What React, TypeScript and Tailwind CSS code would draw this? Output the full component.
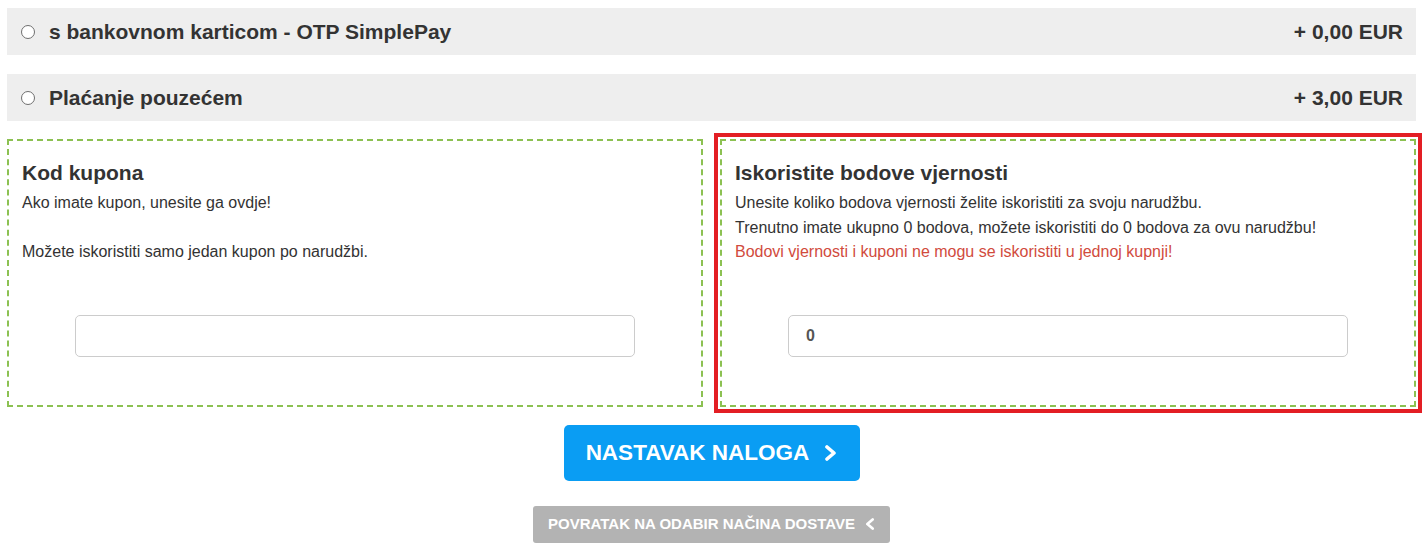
const methods = [
  { name: "s bankovnom karticom - OTP SimplePay", price: "+ 0,00 EUR" },
  { name: "Plaćanje pouzećem", price: "+ 3,00 EUR" },
]

function Chevron({ dir, className }: { dir: "left" | "right"; className?: string }) {
  const points = dir === "right" ? "3,2 10,8 3,14" : "10,2 3,8 10,14"
  return (
    <svg viewBox="0 0 13 16" className={className} fill="none">
      <polyline points={points} stroke="currentColor" strokeWidth="3.6" strokeLinecap="round" strokeLinejoin="round" />
    </svg>
  )
}

function PaymentRow({ name, price }: { name: string; price: string }) {
  return (
    <label className="flex h-[47px] items-center justify-between bg-[#eeeeee] pl-[14px] pr-[13px] text-[21px] font-bold text-[#333333]">
      <span className="flex items-center gap-[14px]">
        <span className="h-[14px] w-[14px] rounded-full border-[1.5px] border-[#6f6f6f] bg-white" />
        {name}
      </span>
      <span>{price}</span>
    </label>
  )
}

export default function App() {
  return (
    <div className="bg-white px-[7px] pt-2 pb-[9px] font-['Liberation_Sans',Arial,sans-serif] text-[#333333]">
      <div className="flex flex-col gap-[19px]">
        {methods.map((m) => (
          <PaymentRow key={m.name} name={m.name} price={m.price} />
        ))}
      </div>

      <div className="mt-[18px] grid grid-cols-2 gap-[17px]">
        <div className="flex flex-col border-2 border-dashed border-[#8cc152] px-[13px] pt-[20px] pb-[48px]">
          <h3 className="text-[21px] font-bold leading-6">Kod kupona</h3>
          <p className="mt-[6px] text-[16px] leading-[24.5px]">
            Ako imate kupon, unesite ga ovdje!
            <br />
            <br />
            Možete iskoristiti samo jedan kupon po narudžbi.
          </p>
          <input
            type="text"
            className="mx-auto mt-[50px] h-[42px] w-[560px] rounded-[5px] border border-[#cccccc] px-[17px] text-[16px] font-bold text-[#555555] outline-none"
          />
        </div>

        <div className="flex flex-col border-2 border-dashed border-[#8cc152] px-[13px] pt-[20px] pb-[48px] outline-4 outline-offset-2 outline-[#e31e24] outline-solid">
          <h3 className="text-[21px] font-bold leading-6">Iskoristite bodove vjernosti</h3>
          <p className="mt-[6px] text-[16px] leading-[24.5px]">
            Unesite koliko bodova vjernosti želite iskoristiti za svoju narudžbu.
            <br />
            Trenutno imate ukupno 0 bodova, možete iskoristiti do 0 bodova za ovu narudžbu!
            <br />
            <span className="text-[#d14b3d]">Bodovi vjernosti i kuponi ne mogu se iskoristiti u jednoj kupnji!</span>
          </p>
          <input
            type="text"
            defaultValue="0"
            className="mx-auto mt-[50px] h-[42px] w-[560px] rounded-[5px] border border-[#cccccc] px-[17px] text-[16px] font-bold text-[#555555] outline-none"
          />
        </div>
      </div>

      <div className="mt-[18px] flex flex-col items-center gap-[25px]">
        <button className="flex h-[56px] w-[296px] items-center justify-center gap-[15px] rounded-[5px] bg-[#0a9df3] text-[22.5px] font-bold text-white">
          NASTAVAK NALOGA
          <Chevron dir="right" className="h-[16px] w-[13px]" />
        </button>
        <button className="flex h-[37px] w-[357px] items-center justify-center gap-[10px] rounded-[3px] bg-[#b3b3b3] text-[15px] font-bold text-white">
          POVRATAK NA ODABIR NAČINA DOSTAVE
          <Chevron dir="left" className="h-[12px] w-[10px]" />
        </button>
      </div>
    </div>
  )
}
